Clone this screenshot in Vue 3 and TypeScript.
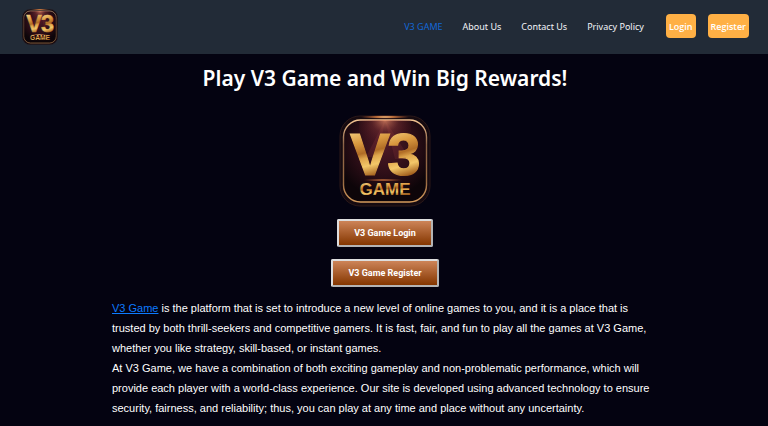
<script setup lang="ts">
interface NavLink {
  label: string
  href: string
  active?: boolean
}

const links: NavLink[] = [
  { label: 'V3 GAME', href: '#home', active: true },
  { label: 'About Us', href: '#about' },
  { label: 'Contact Us', href: '#contact' },
  { label: 'Privacy Policy', href: '#privacy' },
]
</script>

<template>
  <svg class="defs" width="0" height="0" aria-hidden="true">
    <defs>
      <linearGradient id="gold" x1="0" y1="0" x2="0.15" y2="1">
        <stop offset="0.15" stop-color="#f4cd7c" />
        <stop offset="0.36" stop-color="#d9983f" />
        <stop offset="0.52" stop-color="#b06c26" />
        <stop offset="0.6" stop-color="#dfa64c" />
        <stop offset="0.72" stop-color="#f3c869" />
        <stop offset="0.88" stop-color="#a5621f" />
      </linearGradient>
      <linearGradient id="rim" x1="0" y1="0" x2="0" y2="1">
        <stop offset="0" stop-color="#f3c492" />
        <stop offset="0.3" stop-color="#8c6347" />
        <stop offset="0.75" stop-color="#9b6c43" />
        <stop offset="1" stop-color="#d59b5c" />
      </linearGradient>
      <radialGradient id="face" cx="0.5" cy="0.32" r="0.62">
        <stop offset="0" stop-color="#4d1925" />
        <stop offset="0.6" stop-color="#2b0d16" />
        <stop offset="1" stop-color="#0d0509" />
      </radialGradient>
      <radialGradient id="glow" cx="0.5" cy="0" r="0.6">
        <stop offset="0" stop-color="#f0936c" stop-opacity="0.75" />
        <stop offset="0.45" stop-color="#a54742" stop-opacity="0.3" />
        <stop offset="1" stop-color="#76202c" stop-opacity="0" />
      </radialGradient>
      <radialGradient id="spark">
        <stop offset="0" stop-color="#fff0bd" />
        <stop offset="0.4" stop-color="#e78b48" stop-opacity="0.8" />
        <stop offset="1" stop-color="#ba552b" stop-opacity="0" />
      </radialGradient>
    </defs>
    <symbol id="v3-logo" viewBox="0 0 92 92">
      <rect x="1" y="1" width="90" height="90" rx="20" fill="#150a10" stroke="#2a1819" />
      <rect x="4.5" y="5" width="83" height="82" rx="17" fill="url(#face)" stroke="url(#rim)" stroke-width="1.4" />
      <path d="M46 5 27 42h12ZM46 5l10 39h15Z" fill="#d75e54" opacity="0.12" />
      <rect x="20" y="5" width="52" height="45" fill="url(#glow)" />
      <g class="lettering" text-anchor="middle">
        <g fill="url(#gold)" stroke="url(#gold)" stroke-width="1.2">
          <text class="big" x="31" y="60">V</text>
          <text class="big" x="65" y="60">3</text>
        </g>
        <text class="small" x="46" y="80" fill="url(#gold)">GAME</text>
      </g>
      <ellipse cx="44" cy="65" rx="23" ry="0.9" fill="url(#spark)" />
      <ellipse cx="46" cy="2" rx="25" ry="1.8" fill="url(#spark)" />
    </symbol>
  </svg>

  <header class="topbar">
    <a class="brand" href="#home" aria-label="V3 Game">
      <svg class="brand-logo" aria-hidden="true"><use href="#v3-logo" /></svg>
    </a>
    <nav class="nav">
      <a
        v-for="link in links"
        :key="link.label"
        class="nav-link"
        :class="{ active: link.active }"
        :href="link.href"
      >{{ link.label }}</a>
    </nav>
    <div class="account">
      <button class="pill" type="button">Login</button>
      <button class="pill" type="button">Register</button>
    </div>
  </header>

  <main class="content">
    <h1>Play V3 Game and Win Big Rewards!</h1>
    <svg class="hero-logo" role="img" aria-label="V3 Game"><use href="#v3-logo" /></svg>
    <div class="actions">
      <button class="copper" type="button">V3 Game Login</button>
      <button class="copper" type="button">V3 Game Register</button>
    </div>
    <div class="intro">
      <p><a href="#home">V3 Game</a> is the platform that is set to introduce a new level of online games to you, and it is a place that is trusted by both thrill-seekers and competitive gamers. It is fast, fair, and fun to play all the games at V3 Game, whether you like strategy, skill-based, or instant games.</p>
      <p>At V3 Game, we have a combination of both exciting gameplay and non-problematic performance, which will provide each player with a world-class experience. Our site is developed using advanced technology to ensure security, fairness, and reliability; thus, you can play at any time and place without any uncertainty.</p>
    </div>
  </main>
</template>

<style>
body {
  background: #040311;
}
</style>

<style scoped>
.defs {
  position: absolute;
}
.lettering {
  font-family: "Liberation Sans", Arial, sans-serif;
  font-weight: 700;
}
.big {
  font-size: 60px;
}
.small {
  font-size: 17px;
}
.topbar {
  display: flex;
  align-items: center;
  box-sizing: border-box;
  height: 54px;
  padding: 0 19px 0 22px;
  background: #222b37;
  font-family: "Noto Sans", sans-serif;
}
.brand {
  display: flex;
  margin-right: auto;
}
.brand-logo {
  width: 36px;
  height: 36px;
}
.nav {
  display: flex;
  gap: 20px;
}
.nav-link {
  color: #f2f4f7;
  font-size: 9px;
  line-height: 16px;
  text-decoration: none;
}
.nav-link.active {
  color: #1268d8;
}
.account {
  display: flex;
  gap: 12px;
  margin-left: 22px;
  padding-bottom: 2px;
}
.pill {
  height: 24px;
  padding: 0 3px;
  border: 0;
  border-radius: 4px;
  background: #ffb045;
  color: #fff;
  font-family: "Open Sans", sans-serif;
  font-size: 9px;
  font-weight: 600;
}
.content {
  display: flex;
  flex-direction: column;
  align-items: center;
  padding-left: 2px;
  color: #fff;
}
h1 {
  margin: 8px 0 21px;
  font-family: "Noto Sans", sans-serif;
  font-size: 21px;
  font-weight: 600;
  line-height: 32px;
}
.hero-logo {
  width: 92px;
  height: 92px;
}
.actions {
  display: flex;
  flex-direction: column;
  align-items: center;
  gap: 12px;
  margin-top: 12px;
}
.copper {
  height: 28px;
  padding: 0 15px;
  border: 2px solid;
  border-color: #dedede #b4b4b4 #b4b4b4 #dedede;
  border-radius: 2px;
  background: linear-gradient(#cd8458, #843600);
  color: #fff;
  font-family: Roboto, sans-serif;
  font-size: 9px;
  font-weight: 700;
}
.intro {
  width: 100%;
  max-width: 546px;
  margin-top: 11px;
  font-family: "Liberation Sans", Arial, sans-serif;
  font-size: 11px;
  line-height: 20px;
}
.intro p {
  margin: 0;
}
.intro a {
  color: #0d7bff;
}
</style>
